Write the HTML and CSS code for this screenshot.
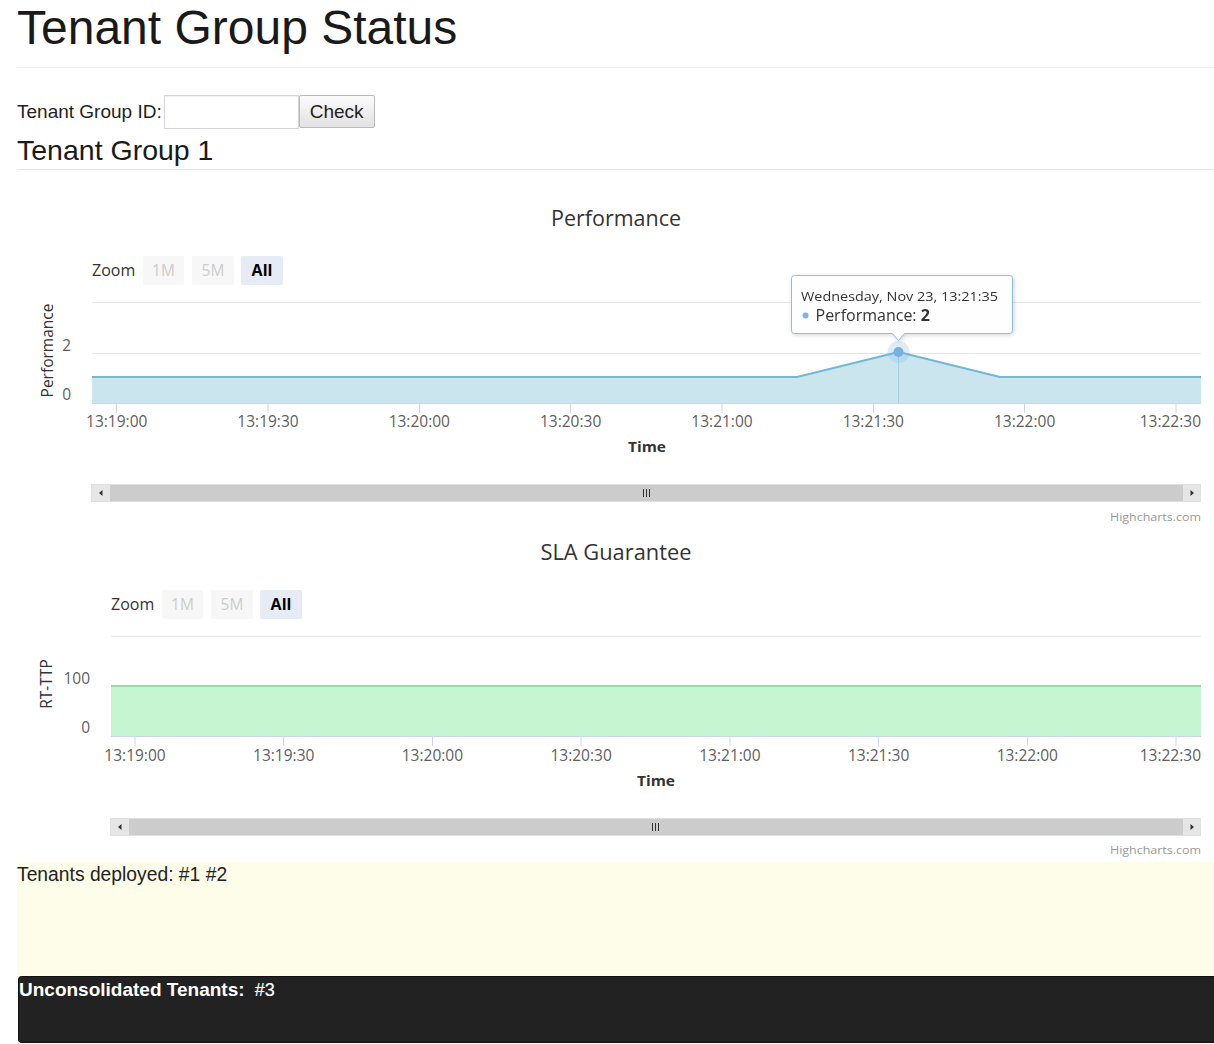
FILE: index.html
```html
<!DOCTYPE html>
<html lang="en">
<head>
<meta charset="utf-8">
<title>Tenant Group Status</title>
<link rel="stylesheet" href="styles.css">
</head>
<body>
<div class="page">
  <h1 class="title">Tenant Group Status</h1>
  <div class="form-row">
    <label class="id-label" for="gid">Tenant Group ID:</label>
    <input class="id-input" id="gid" type="text">
    <button class="check-btn" type="button">Check</button>
  </div>
  <h2 class="group-title">Tenant Group 1</h2>

  <div class="charts">
    <svg class="chart" width="1198" height="334" viewBox="0 0 1198 334">
      <text class="c-title" x="599" y="36" textLength="130" lengthAdjust="spacingAndGlyphs">Performance</text>

      <text class="c-zoom" x="75" y="86">Zoom</text>
      <rect class="btn-off" x="126" y="66" width="41" height="29" rx="2"/>
      <text class="btn-off-t" x="146.5" y="86">1M</text>
      <rect class="btn-off" x="175" y="66" width="42" height="29" rx="2"/>
      <text class="btn-off-t" x="196" y="86">5M</text>
      <rect class="btn-on" x="224" y="66" width="42" height="29" rx="2"/>
      <text class="btn-on-t" x="245" y="86">All</text>

      <line class="grid" x1="75" y1="112.5" x2="1184" y2="112.5"/>
      <line class="grid" x1="75" y1="163.5" x2="1184" y2="163.5"/>

      <path class="area-blue" d="M75 187 L780 187 L881.5 162 L983 187 L1184 187 L1184 213 L75 213 Z"/>
      <path class="line-blue" d="M75 187 L780 187 L881.5 162 L983 187 L1184 187"/>
      <line class="crosshair" x1="881.5" y1="162" x2="881.5" y2="213"/>
      <line class="axis" x1="75" y1="213.5" x2="1184" y2="213.5"/>

      <line class="tick" x1="99.5" y1="213" x2="99.5" y2="223"/>
      <line class="tick" x1="251" y1="213" x2="251" y2="223"/>
      <line class="tick" x1="402.5" y1="213" x2="402.5" y2="223"/>
      <line class="tick" x1="553.5" y1="213" x2="553.5" y2="223"/>
      <line class="tick" x1="705" y1="213" x2="705" y2="223"/>
      <line class="tick" x1="856.5" y1="213" x2="856.5" y2="223"/>
      <line class="tick" x1="1007.5" y1="213" x2="1007.5" y2="223"/>
      <line class="tick" x1="1159" y1="213" x2="1159" y2="223"/>

      <text class="x-lab" x="99.7" y="237">13:19:00</text>
      <text class="x-lab" x="251" y="237">13:19:30</text>
      <text class="x-lab" x="402.3" y="237">13:20:00</text>
      <text class="x-lab" x="553.6" y="237">13:20:30</text>
      <text class="x-lab" x="705" y="237">13:21:00</text>
      <text class="x-lab" x="856.3" y="237">13:21:30</text>
      <text class="x-lab" x="1007.6" y="237">13:22:00</text>
      <text class="x-lab x-lab-end" x="1184" y="237">13:22:30</text>

      <text class="y-lab" x="54" y="161">2</text>
      <text class="y-lab" x="54" y="210">0</text>
      <text class="y-title" transform="translate(35.5 160.5) rotate(-90)">Performance</text>
      <text class="x-title" x="630" y="262" textLength="38" lengthAdjust="spacingAndGlyphs">Time</text>

      <rect class="sb-track" x="74.5" y="294.5" width="1109" height="17"/>
      <rect class="sb-btn" x="75" y="295" width="18" height="16"/>
      <rect class="sb-btn" x="1166" y="295" width="17.5" height="16"/>
      <path class="sb-arrow" d="M85.5 300 L82 303 L85.5 306 Z"/>
      <path class="sb-arrow" d="M1173.5 300 L1177 303 L1173.5 306 Z"/>
      <line class="sb-grip" x1="626.5" y1="299" x2="626.5" y2="307"/>
      <line class="sb-grip" x1="629.5" y1="299" x2="629.5" y2="307"/>
      <line class="sb-grip" x1="632.5" y1="299" x2="632.5" y2="307"/>

      <text class="credit" x="1184" y="331" textLength="91" lengthAdjust="spacingAndGlyphs">Highcharts.com</text>

      <circle class="halo" cx="881.5" cy="162" r="11"/>
      <circle class="marker" cx="881.5" cy="162" r="5"/>

      <g class="tooltip">
        <path class="tt-box" d="M777.5 85.5 H992.5 Q995.5 85.5 995.5 88.5 V140.5 Q995.5 143.5 992.5 143.5 H887.5 L881.5 150.5 L875.5 143.5 H777.5 Q774.5 143.5 774.5 140.5 V88.5 Q774.5 85.5 777.5 85.5 Z"/>
        <text class="tt-head" x="784" y="110.5" textLength="197" lengthAdjust="spacingAndGlyphs">Wednesday, Nov 23, 13:21:35</text>
        <circle class="tt-dot" cx="788.5" cy="125.5" r="3"/>
        <text class="tt-body" x="798.5" y="131">Performance: <tspan class="tt-bold">2</tspan></text>
      </g>
    </svg>

    <svg class="chart" width="1198" height="334" viewBox="0 0 1198 334">
      <text class="c-title" x="599" y="36" textLength="151" lengthAdjust="spacingAndGlyphs">SLA Guarantee</text>

      <text class="c-zoom" x="94" y="86">Zoom</text>
      <rect class="btn-off" x="145" y="66" width="41" height="29" rx="2"/>
      <text class="btn-off-t" x="165.5" y="86">1M</text>
      <rect class="btn-off" x="194" y="66" width="42" height="29" rx="2"/>
      <text class="btn-off-t" x="215" y="86">5M</text>
      <rect class="btn-on" x="243" y="66" width="42" height="29" rx="2"/>
      <text class="btn-on-t" x="264" y="86">All</text>

      <line class="grid" x1="94" y1="112.5" x2="1184" y2="112.5"/>
      <line class="grid" x1="94" y1="162.5" x2="1184" y2="162.5"/>

      <path class="area-green" d="M94 162 L1184 162 L1184 212 L94 212 Z"/>
      <path class="line-green" d="M94 162 L1184 162"/>
      <line class="axis" x1="94" y1="212.5" x2="1184" y2="212.5"/>

      <line class="tick" x1="118" y1="212" x2="118" y2="222"/>
      <line class="tick" x1="266.5" y1="212" x2="266.5" y2="222"/>
      <line class="tick" x1="415.5" y1="212" x2="415.5" y2="222"/>
      <line class="tick" x1="564" y1="212" x2="564" y2="222"/>
      <line class="tick" x1="713" y1="212" x2="713" y2="222"/>
      <line class="tick" x1="861.5" y1="212" x2="861.5" y2="222"/>
      <line class="tick" x1="1010.5" y1="212" x2="1010.5" y2="222"/>
      <line class="tick" x1="1159" y1="212" x2="1159" y2="222"/>

      <text class="x-lab" x="118" y="237">13:19:00</text>
      <text class="x-lab" x="266.7" y="237">13:19:30</text>
      <text class="x-lab" x="415.4" y="237">13:20:00</text>
      <text class="x-lab" x="564.1" y="237">13:20:30</text>
      <text class="x-lab" x="712.9" y="237">13:21:00</text>
      <text class="x-lab" x="861.6" y="237">13:21:30</text>
      <text class="x-lab" x="1010.3" y="237">13:22:00</text>
      <text class="x-lab x-lab-end" x="1184" y="237">13:22:30</text>

      <text class="y-lab" x="73" y="160">100</text>
      <text class="y-lab" x="73" y="209">0</text>
      <text class="y-title" transform="translate(35 160) rotate(-90)">RT-TTP</text>
      <text class="x-title" x="639" y="262" textLength="38" lengthAdjust="spacingAndGlyphs">Time</text>

      <rect class="sb-track" x="93.5" y="294.5" width="1090" height="17"/>
      <rect class="sb-btn" x="94" y="295" width="18" height="16"/>
      <rect class="sb-btn" x="1166" y="295" width="17.5" height="16"/>
      <path class="sb-arrow" d="M104.5 300 L101 303 L104.5 306 Z"/>
      <path class="sb-arrow" d="M1173.5 300 L1177 303 L1173.5 306 Z"/>
      <line class="sb-grip" x1="635.5" y1="299" x2="635.5" y2="307"/>
      <line class="sb-grip" x1="638.5" y1="299" x2="638.5" y2="307"/>
      <line class="sb-grip" x1="641.5" y1="299" x2="641.5" y2="307"/>

      <text class="credit" x="1184" y="330" textLength="91" lengthAdjust="spacingAndGlyphs">Highcharts.com</text>
    </svg>
  </div>

  <div class="deployed">Tenants deployed: #1 #2</div>
  <div class="unconsolidated"><strong class="unc-label">Unconsolidated Tenants:</strong> <span class="unc-value">#3</span></div>
</div>
</body>
</html>
```

FILE: styles.css
```css
html, body {
  margin: 0;
  padding: 0;
  background: #ffffff;
  overflow: hidden;
}

body {
  font-family: "Liberation Sans", Arial, sans-serif;
  color: #1e1e1e;
}

.page {
  margin-left: 17px;
}

.title {
  margin: 0;
  padding: 2px 0 13px 0;
  font-size: 48px;
  line-height: 52px;
  font-weight: 400;
  color: #1a1a1a;
  border-bottom: 1px solid #eeeeee;
}

.form-row {
  margin-top: 27px;
  display: flex;
  align-items: center;
  height: 34px;
}

.id-label {
  font-size: 19px;
  color: #222;
}

.id-input {
  margin: 0 0 0 2px;
  width: 135px;
  height: 34px;
  box-sizing: border-box;
  border: 1px solid #d4d4d4;
  box-shadow: inset 0 1px 1px rgba(0, 0, 0, 0.06);
  padding: 0 4px;
  font-family: "Liberation Sans", Arial, sans-serif;
  font-size: 16px;
}

.check-btn {
  margin: 0;
  width: 76px;
  height: 33px;
  box-sizing: border-box;
  border: 1px solid #b9b9b9;
  border-radius: 2px;
  background: linear-gradient(#fbfbfb, #e2e2e2);
  font-family: "Liberation Sans", Arial, sans-serif;
  font-size: 19px;
  color: #222;
  padding: 0;
  align-self: flex-start;
}

.group-title {
  margin: 5px 0 0 0;
  padding-bottom: 3px;
  font-size: 28.5px;
  line-height: 32px;
  font-weight: 400;
  color: #1a1a1a;
  border-bottom: 1px solid #e6e6e6;
}

.charts {
  margin-top: 20px;
}

.chart {
  display: block;
  overflow: visible;
}

.chart text {
  font-family: "Open Sans", "DejaVu Sans", sans-serif;
}

.c-title { font-size: 21px; fill: #333333; text-anchor: middle; }
.c-zoom { font-size: 16px; fill: #333333; }
.btn-off { fill: #f7f7f7; }
.btn-off-t { font-size: 15.5px; fill: #cccccc; text-anchor: middle; }
.btn-on { fill: #e6ebf5; }
.btn-on-t { font-size: 16px; font-weight: 700; fill: #000000; text-anchor: middle; }

.grid { stroke: #e6e6e6; stroke-width: 1; }
.axis { stroke: #ccd6eb; stroke-width: 1; }
.tick { stroke: #ccd6eb; stroke-width: 1; }

.area-blue { fill: #cbe5ee; }
.line-blue { fill: none; stroke: #72b8d1; stroke-width: 2; stroke-linejoin: round; }
.crosshair { stroke: #a8cfdc; stroke-width: 1; }
.area-green { fill: #c5f5d1; }
.line-green { fill: none; stroke: #8fe49d; stroke-width: 2; }

.x-lab { font-size: 15.5px; fill: #606060; text-anchor: middle; }
.x-lab-end { text-anchor: end; }
.y-lab { font-size: 15.5px; fill: #606060; text-anchor: end; }
.y-title { font-size: 15.5px; fill: #333333; text-anchor: middle; }
.x-title { font-size: 15px; font-weight: 700; fill: #333333; text-anchor: middle; }

.sb-track { fill: #cccccc; stroke: #e0e0e0; stroke-width: 1; }
.sb-btn { fill: #e6e6e6; }
.sb-arrow { fill: #333333; }
.sb-grip { stroke: #333333; stroke-width: 1; }

.credit { font-size: 11.5px; fill: #999999; text-anchor: end; }

.halo { fill: rgba(124, 181, 236, 0.25); }
.marker { fill: #74b1e2; }

.tooltip { filter: drop-shadow(1px 1px 2px rgba(0, 0, 0, 0.18)); }
.tt-box { fill: rgba(255, 255, 255, 0.96); stroke: #8cbee8; stroke-width: 1; }
.tt-head { font-size: 13.5px; fill: #333333; }
.tt-body { font-size: 16px; fill: #333333; }
.tt-bold { font-weight: 700; }
.tt-dot { fill: #7cb5ec; }

.deployed {
  margin-top: 4px;
  height: 113px;
  background: #fefde9;
  font-size: 19.3px;
  line-height: 26px;
  color: #222;
}

.unconsolidated {
  margin: 1px 0 0 1px;
  height: 67px;
  box-sizing: border-box;
  background: #222222;
  border: 1px solid #111111;
  border-right: none;
  border-radius: 4px 0 0 4px;
  padding: 1px 0 0 0;
  font-size: 19px;
  line-height: 24px;
  color: #ffffff;
}

.unc-label {
  font-weight: 700;
}

.unc-value {
  margin-left: 5px;
  font-size: 18px;
  text-shadow: 0 0 1px #888;
}
```
